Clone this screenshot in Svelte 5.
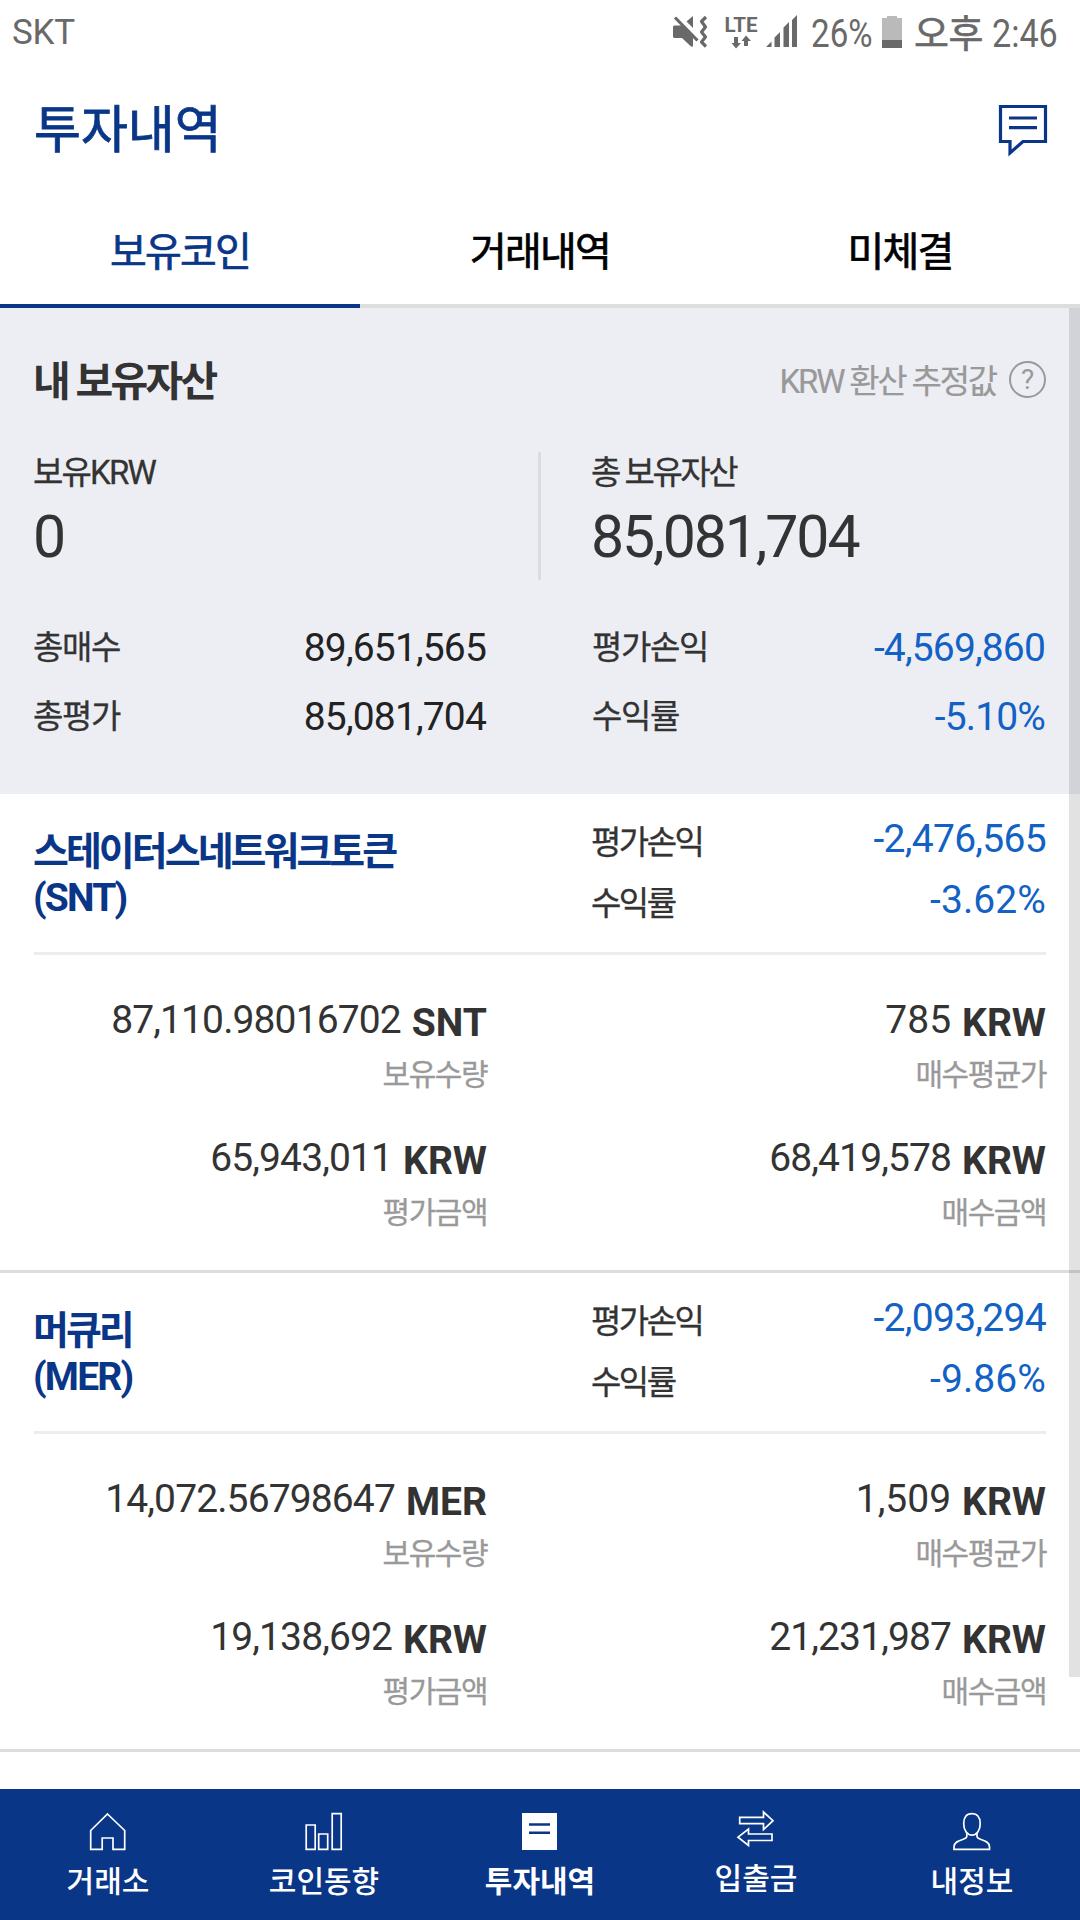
<script>
  const tabs = ['보유코인', '거래내역', '미체결'];

  const coins = [
    {
      name: '스테이터스네트워크토큰',
      symbol: 'SNT',
      profit: '-2,476,565',
      rate: '-3.62%',
      cells: [
        { value: '87,110.98016702', unit: 'SNT', label: '보유수량' },
        { value: '785', unit: 'KRW', label: '매수평균가' },
        { value: '65,943,011', unit: 'KRW', label: '평가금액' },
        { value: '68,419,578', unit: 'KRW', label: '매수금액' }
      ]
    },
    {
      name: '머큐리',
      symbol: 'MER',
      profit: '-2,093,294',
      rate: '-9.86%',
      cells: [
        { value: '14,072.56798647', unit: 'MER', label: '보유수량' },
        { value: '1,509', unit: 'KRW', label: '매수평균가' },
        { value: '19,138,692', unit: 'KRW', label: '평가금액' },
        { value: '21,231,987', unit: 'KRW', label: '매수금액' }
      ]
    }
  ];

  const nav = [
    { id: 'home', label: '거래소' },
    { id: 'trend', label: '코인동향' },
    { id: 'invest', label: '투자내역' },
    { id: 'transfer', label: '입출금' },
    { id: 'me', label: '내정보' }
  ];
</script>

<div class="screen">
  <div class="status">
    <span class="carrier">SKT</span>
    <div class="indicators">
      <svg class="mute" width="36" height="34" viewBox="0 0 36 34">
        <path d="M1.500 10.500H9L20 21V31.500H18L9 23H1.500Q0 23 0 21.500V12Q0 10.500 1.500 10.500z" />
        <path d="M13.500 6.500L20 1V13z" />
        <path class="line" d="M2 2.500L24.500 25.500" />
        <path class="line wave" d="M33 2L28.500 6.500L32.500 12L28.500 17L32.500 22L28.500 27L33 31.500" />
      </svg>
      <div class="lte">
        <b>LTE</b>
        <svg width="20" height="14" viewBox="0 0 20 14">
          <path d="M3 2h4v6h3l-5 5.500L.500 8H3zM13 11h4V6h3l-5-5.500L10.500 6H13z" />
        </svg>
      </div>
      <svg class="signal" width="32" height="34" viewBox="0 0 32 34">
        <path d="M0 32L5.500 26.500V32zM8.500 32V22.500L14 17v15zM17.500 32V12.500L23 7v25zM26 32V5l5-5v32z" />
      </svg>
      <span class="percent"><i>26%</i></span>
      <svg class="battery" width="20" height="32" viewBox="0 0 20 32">
        <path class="shell" d="M5 0h10v2h5v30H0V2h5z" />
        <path d="M0 24h20v8H0z" />
      </svg>
      <span class="ampm">오후</span>
      <span class="clock"><i>2:46</i></span>
    </div>
  </div>

  <header>
    <h1>투자내역</h1>
    <svg width="50" height="54" viewBox="0 0 50 54">
      <path d="M2.500 2.500h45v35H25L12 49V37.500H2.500z" />
      <path d="M11 14h28M11 23.700h28" />
    </svg>
  </header>

  <div class="tabs">
    {#each tabs as tab, i}
      <div class="tab" class:active={i === 0}>{tab}</div>
    {/each}
  </div>

  <main>
    <section class="assets">
      <div class="assets-head">
        <h2>내 보유자산</h2>
        <span class="hint">KRW 환산 추정값</span>
        <span class="help">?</span>
      </div>
      <div class="balances">
        <div class="balance krw">
          <span>보유KRW</span>
          <strong>0</strong>
        </div>
        <div class="rule"></div>
        <div class="balance">
          <span>총 보유자산</span>
          <strong>85,081,704</strong>
        </div>
      </div>
      <div class="totals">
        <div class="total"><span>총매수</span><em>89,651,565</em></div>
        <div class="total"><span>평가손익</span><em class="down">-4,569,860</em></div>
        <div class="total"><span>총평가</span><em>85,081,704</em></div>
        <div class="total"><span>수익률</span><em class="down">-5.10%</em></div>
      </div>
    </section>

    {#each coins as coin}
      <section class="coin">
        <div class="coin-head">
          <div class="name">{coin.name}<br /><span class="symbol">({coin.symbol})</span></div>
          <div class="results">
            <div class="result"><span>평가손익</span><em>{coin.profit}</em></div>
            <div class="result rate"><span>수익률</span><em>{coin.rate}</em></div>
          </div>
        </div>
        <div class="cells">
          {#each coin.cells as cell}
            <div class="cell">
              <div class="amount">
                <span class:short={cell.value.length < 6}>{cell.value}</span><b>{cell.unit}</b>
              </div>
              <div class="label">{cell.label}</div>
            </div>
          {/each}
        </div>
      </section>
    {/each}
    <div class="scrollbar"></div>
  </main>

  <nav>
    {#each nav as item}
      <div class="item" class:current={item.id === 'invest'} class:raised={item.id === 'transfer'}>
        <svg width="44" height="40" viewBox="0 0 44 40">
          {#if item.id === 'home'}
            <path d="M21.500 2L38.700 18.500V37.300H27V26H16.200V37.300H4.700V18.500z" />
          {:else if item.id === 'trend'}
            <path d="M4.200 13h9v24.300h-9zM16.700 22h9v15.300h-9zM30.200 1.700h9v35.600h-9z" />
          {:else if item.id === 'invest'}
            <path class="solid" d="M4 1h35v37H4z" />
            <path class="cut" d="M11 12.500h21M11 20.800h21" />
          {:else if item.id === 'transfer'}
            <path d="M5.700 8.300H29.500V3L39 11.700L29.500 20.500V14.700H5.700z" />
            <path d="M38 25H14.500V20L4 28.200L14.500 36.500V31.500H38z" />
          {:else}
            <path d="M22 1.700c5.500 0 8.200 3.500 8.200 10C30.200 18 27 23.200 22 23.200S13.700 18 13.700 11.700c0-6.500 2.700-10 8.300-10z" />
            <path d="M16.800 21v3.500c0 4-12.800 2.500-12.800 10.500v2.300h35.500V35c0-8-12.500-6.500-12.500-10.500V21" />
          {/if}
        </svg>
        <span>{item.label}</span>
      </div>
    {/each}
  </nav>
</div>

<style>
  :global(body) {
    margin: 0;
    background: #fff;
  }
  .screen {
    width: 1080px;
    height: 1920px;
    display: flex;
    flex-direction: column;
    overflow: hidden;
    background: #fff;
    color: #333;
    font-family: Roboto, 'Noto Sans CJK KR', sans-serif;
  }
  h1, h2 {
    margin: 0;
  }
  em, i {
    font-style: normal;
  }
  span, em, strong, b, h1, h2 {
    white-space: nowrap;
  }

  .status {
    height: 72px;
    flex: none;
    display: flex;
    justify-content: space-between;
    padding: 0 22px 0 12px;
    box-sizing: border-box;
    color: #696969;
    fill: #696969;
  }
  .carrier {
    font-size: 35px;
    line-height: 66px;
    letter-spacing: -0.3px;
  }
  .indicators {
    display: flex;
    align-items: flex-start;
    font-size: 39px;
    line-height: 69px;
  }
  .indicators i {
    display: inline-block;
    transform-origin: 0 50%;
  }
  .mute {
    margin: 15px 15px 0 0;
  }
  .mute .line {
    fill: none;
    stroke: #696969;
    stroke-width: 3.200;
  }
  .mute .wave {
    stroke-linejoin: round;
  }
  .lte {
    width: 34px;
    margin: 15px 8px 0 0;
    display: flex;
    flex-direction: column;
    align-items: center;
    font-size: 20.5px;
    line-height: 20px;
  }
  .lte b {
    font-weight: 700;
  }
  .signal {
    margin: 15px 13px 0 0;
  }
  .percent {
    width: 71px;
  }
  .percent i {
    transform: scaleX(0.85);
  }
  .battery {
    margin: 16px 13px 0 0;
  }
  .shell {
    fill: #bababa;
  }
  .ampm {
    width: 78px;
    margin-left: -1px;
    font-size: 38px;
    letter-spacing: -0.5px;
    -webkit-text-stroke: 0.6px;
  }
  .clock {
    width: 66px;
  }
  .clock i {
    transform: scaleX(0.875);
  }

  header {
    height: 118px;
    flex: none;
    display: flex;
    justify-content: space-between;
    padding: 0 32px 0 34px;
    color: #0a3688;
  }
  h1 {
    font-size: 51px;
    line-height: 118px;
    font-weight: 400;
    -webkit-text-stroke: 0.8px;
  }
  header svg {
    margin-top: 32px;
    fill: none;
    stroke: #0a3688;
    stroke-width: 3.200;
  }

  .tabs {
    flex: none;
    display: grid;
    grid-template-columns: repeat(3, 1fr);
  }
  .tab {
    height: 118px;
    padding-top: 10px;
    box-sizing: border-box;
    border-bottom: 4px solid #ddd;
    text-align: center;
    font-size: 40px;
    line-height: 105px;
    font-weight: 400;
    -webkit-text-stroke: 0.7px;
    letter-spacing: -1.800px;
    color: #000;
  }
  .tab.active {
    color: #0a3688;
    border-color: #0a3688;
  }

  main {
    flex: 1;
    min-height: 0;
    position: relative;
    overflow: hidden;
  }
  .scrollbar {
    position: absolute;
    top: 0;
    right: 0;
    width: 11px;
    height: 1369px;
    background: rgba(0, 0, 0, 0.115);
  }

  .assets {
    height: 486px;
    box-sizing: border-box;
    padding: 42px 34px 0 33px;
    background: #edeef4;
  }
  .assets-head {
    height: 64px;
    display: flex;
    align-items: center;
    line-height: 66px;
  }
  h2 {
    flex: 1;
    font-size: 41px;
    font-weight: 700;
    letter-spacing: -2.700px;
  }
  .hint {
    font-size: 33px;
    color: #999;
    letter-spacing: -2.200px;
    -webkit-text-stroke: 0.2px;
  }
  .help {
    width: 33px;
    height: 33px;
    margin: -5px 0 0 13px;
    border: 2px solid #999;
    border-radius: 50%;
    color: #999;
    font-size: 28px;
    line-height: 34px;
    text-align: center;
  }
  .balances {
    display: grid;
    grid-template-columns: 505px 3px 1fr;
    height: 128px;
    margin-top: 38px;
  }
  .rule {
    background: #dcdcdf;
  }
  .balance {
    display: flex;
    flex-direction: column;
  }
  .rule + .balance {
    padding-left: 50px;
  }
  .balance span {
    font-size: 33px;
    line-height: 41px;
    letter-spacing: -2.500px;
    -webkit-text-stroke: 0.3px;
  }
  .balance.krw span {
    letter-spacing: -1.800px;
  }
  .balance strong {
    font-size: 59px;
    line-height: 87px;
    font-weight: 400;
    letter-spacing: -2.100px;
  }
  .totals {
    margin-top: 33px;
    display: grid;
    grid-template-columns: 453px 453px;
    grid-auto-rows: 69px;
    column-gap: 106px;
  }
  .total {
    display: flex;
    justify-content: space-between;
    line-height: 69px;
  }
  .total span {
    font-size: 33px;
    letter-spacing: -1.400px;
    -webkit-text-stroke: 0.3px;
  }
  .total em {
    padding-top: 1px;
    font-size: 39px;
    letter-spacing: -0.850px;
    color: #222;
  }
  .total em.down {
    color: #1261c4;
  }

  .coin {
    height: 479px;
    box-sizing: border-box;
    padding: 0 34px;
    border-bottom: 3px solid #ddd;
  }
  .coin-head {
    height: 161px;
    box-sizing: border-box;
    border-bottom: 3px solid #ededed;
    display: flex;
    justify-content: space-between;
  }
  .name {
    margin-left: -1px;
    padding-top: 35px;
    font-size: 39px;
    line-height: 46px;
    font-weight: 700;
    letter-spacing: -2.950px;
    color: #0a3688;
  }
  .symbol {
    letter-spacing: -1.800px;
  }
  .results {
    width: 455px;
    padding-top: 14px;
  }
  .result {
    display: flex;
    justify-content: space-between;
    height: 61px;
    line-height: 61px;
  }
  .result span {
    padding-top: 4px;
    font-size: 33px;
    letter-spacing: -2.500px;
    -webkit-text-stroke: 0.3px;
  }
  .result em {
    padding-top: 1px;
    font-size: 39px;
    color: #1261c4;
    letter-spacing: -0.700px;
  }
  .result.rate em {
    letter-spacing: 0.100px;
  }
  .cells {
    display: grid;
    grid-template-columns: 453px 455px;
    column-gap: 104px;
    row-gap: 28px;
    padding-top: 42px;
  }
  .amount {
    display: flex;
    justify-content: flex-end;
    gap: 11px;
    height: 46px;
    line-height: 46px;
    font-size: 39px;
  }
  .amount span {
    letter-spacing: -0.880px;
  }
  .amount span.short {
    letter-spacing: 0;
  }
  .amount b {
    padding-top: 3px;
    font-weight: 700;
    letter-spacing: 0;
  }
  .label {
    text-align: right;
    font-size: 30px;
    line-height: 64px;
    letter-spacing: -1.500px;
    color: #999;
    -webkit-text-stroke: 0.3px;
  }

  nav {
    flex: none;
    height: 131px;
    display: grid;
    grid-template-columns: repeat(5, 1fr);
    background: #0a3688;
    color: #fff;
  }
  .item {
    display: flex;
    flex-direction: column;
    align-items: center;
    padding-top: 23px;
  }
  .item.raised {
    padding-top: 20px;
  }
  .item svg {
    fill: none;
    stroke: #fff;
    stroke-width: 1.700;
  }
  .item .solid {
    fill: #fff;
    stroke: none;
  }
  .item .cut {
    stroke: #0a3688;
    stroke-width: 2.600;
  }
  .item span {
    font-size: 30px;
    line-height: 60px;
    font-weight: 500;
    letter-spacing: 0;
  }
  .item.current span {
    font-weight: 700;
  }
</style>
